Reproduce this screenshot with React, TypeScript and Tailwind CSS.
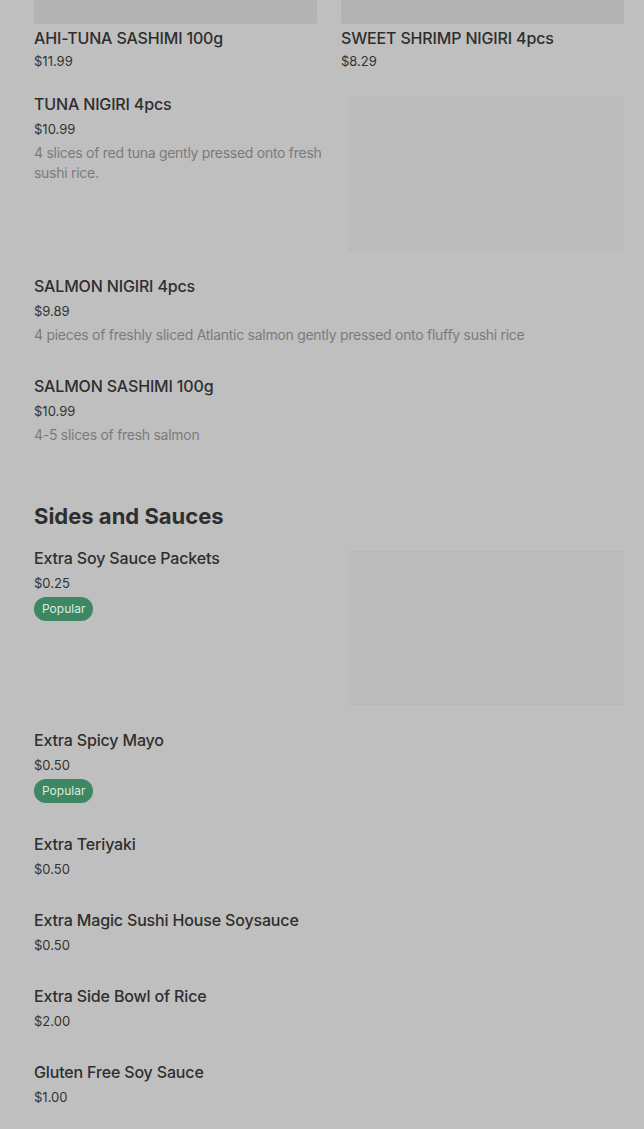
type Item = {
  name: string;
  price: string;
  desc?: string;
  popular?: boolean;
  image?: boolean;
};

const nigiri: Item[] = [
  {
    name: "TUNA NIGIRI 4pcs",
    price: "$10.99",
    desc: "4 slices of red tuna gently pressed onto fresh sushi rice.",
    image: true,
  },
  {
    name: "SALMON NIGIRI 4pcs",
    price: "$9.89",
    desc: "4 pieces of freshly sliced Atlantic salmon gently pressed onto fluffy sushi rice",
  },
  {
    name: "SALMON SASHIMI 100g",
    price: "$10.99",
    desc: "4-5 slices of fresh salmon",
  },
];

const sides: Item[] = [
  { name: "Extra Soy Sauce Packets", price: "$0.25", popular: true, image: true },
  { name: "Extra Spicy Mayo", price: "$0.50", popular: true },
  { name: "Extra Teriyaki", price: "$0.50" },
  { name: "Extra Magic Sushi House Soysauce", price: "$0.50" },
  { name: "Extra Side Bowl of Rice", price: "$2.00" },
  { name: "Gluten Free Soy Sauce", price: "$1.00" },
];

const MenuRow = ({ item }: { item: Item }) => {
  return (
    <div className="flex items-start gap-[24px]">
      <div className="flex-1 pb-[6px]">
        <div className="text-[16px] leading-[24px] font-medium tracking-[-0.01em] text-[#2e2e2e]">{item.name}</div>
        <div className="mt-[3px] text-[13px] leading-[20px] text-[#333333]">{item.price}</div>
        {item.desc && (
          <div className="mt-[4px] text-[14px] leading-[20px] tracking-[-0.02em] text-[#7b7b7b]">{item.desc}</div>
        )}
        {item.popular && (
          <div className="mt-[4px] inline-flex h-[24px] items-center rounded-full bg-[#3e8763] px-[8px] text-[12px] text-[#dcebe2]">
            Popular
          </div>
        )}
      </div>
      {item.image && (
        <div className="mt-[5px] h-[154px] w-[276px] shrink-0 rounded-[2px] border border-[#b9b9b9] bg-[#bcbcbc]" />
      )}
    </div>
  );
};

const App = () => {
  return (
    <div
      className="min-h-screen w-full bg-[#bfbfbf] pl-[34px] pr-[20px] pb-10"
      style={{ fontFamily: "Inter, 'Liberation Sans', sans-serif" }}
    >
      <div className="grid grid-cols-2 gap-x-[24px]">
        {[
          { name: "AHI-TUNA SASHIMI 100g", price: "$11.99" },
          { name: "SWEET SHRIMP NIGIRI 4pcs", price: "$8.29" },
        ].map((c) => (
          <div key={c.name}>
            <div className="h-[24px] rounded-b-[2px] bg-[#b3b3b3]" />
            <div className="mt-[2px] text-[16px] leading-[24px] font-medium tracking-[-0.01em] text-[#2e2e2e]">{c.name}</div>
            <div className="mt-[1px] text-[13px] leading-[20px] text-[#333333]">{c.price}</div>
          </div>
        ))}
      </div>

      <div className="mt-[21px] flex flex-col gap-[23px]">
        {nigiri.map((it) => (
          <MenuRow key={it.name} item={it} />
        ))}
      </div>

      <h2 className="mt-[50px] text-[22px] leading-[30px] font-bold text-[#2e2e2e]">Sides and Sauces</h2>

      <div className="mt-[15px] flex flex-col gap-[23px]">
        {sides.map((it) => (
          <MenuRow key={it.name} item={it} />
        ))}
      </div>
    </div>
  );
};

export default App;
